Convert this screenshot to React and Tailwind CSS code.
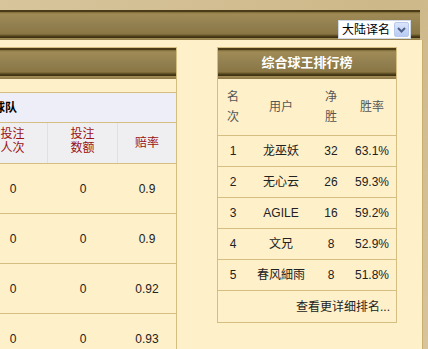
import { useState } from "react";

const bar =
  "bg-[linear-gradient(to_bottom,#4b3c17_0px,#4b3c17_2px,#7d6a36_2px,#a08b56_4px,#938051_14px,#8a7644_24px,#6e5c2c_25px,#3f3213_27px,#3f3213_28px,#a38e5a_28px,#8f7a46_31px)]";

const ranks = [
  ["1", "龙巫妖", "32", "63.1%"],
  ["2", "无心云", "26", "59.3%"],
  ["3", "AGILE", "16", "59.2%"],
  ["4", "文兄", "8", "52.9%"],
  ["5", "春风細雨", "8", "51.8%"],
];

const odds = ["0.9", "0.9", "0.92", "0.93"];

function NameSelect() {
  const [value] = useState("大陆译名");
  return (
    <div className="flex h-[19px] w-[73px] items-stretch border border-[#cfd6e4] bg-white">
      <div className="flex flex-1 items-center pl-[3px] text-[12px] leading-none text-black">{value}</div>
      <div className="m-[1px] flex w-[15px] items-center justify-center rounded-[2px] border border-[#b9c9ec] bg-[linear-gradient(to_bottom,#dbe5fb,#b9cbf4)]">
        <svg width="9" height="6" viewBox="0 0 9 6">
          <polyline points="1,1 4.5,4.5 8,1" fill="none" stroke="#4d6189" strokeWidth="2" />
        </svg>
      </div>
    </div>
  );
}

export default function App() {
  return (
    <div className="h-[349px] w-[428px] overflow-hidden bg-[linear-gradient(135deg,#d8c59c,#cdb889_50%,#d6c49d)] font-['Liberation_Sans','Noto_Sans_CJK_SC',sans-serif]">
      <div className="h-[10px]" />
      <div className="flex">
        <div className="w-[423px]">
          <div className={`flex h-[30px] w-[420px] items-end justify-end pb-[1px] pr-[9px] ${bar}`}>
            <NameSelect />
          </div>
          <div className="flex h-[309px] items-start border-r border-[#c9ae72] bg-[#fef0c9] pt-[7px]">
            {/* left table, cut off at the page edge */}
            <div className="h-[302px] w-[177px] overflow-hidden border-r border-t border-[#d6bd82]">
              <div className={`h-[31px] ${bar}`} />
              <div className="h-[13px]" />
              <div className="flex h-[31px] items-center border-y border-[#d6bd82] bg-[#eeeef8] pl-0 text-[12px] font-bold text-black">
                <span className="-ml-[7px]">球队</span>
              </div>
              <div className="flex h-[41px] border-b border-[#d6bd82] bg-[#efeff2] text-[12px] leading-[14px] text-[#9a1212]">
                <div className="-ml-[22px] flex w-[70px] items-center justify-center border-r border-[#e6e0d2] pb-[4px] text-center">
                  投注<br />人次
                </div>
                <div className="flex w-[70px] items-center justify-center border-r border-[#e6e0d2] pb-[4px] text-center">
                  投注<br />数额
                </div>
                <div className="flex flex-1 items-center justify-center">赔率</div>
              </div>
              {odds.map((o, i) => (
                <div key={i} className="flex h-[50px] items-center border-b border-[#d6bd82] text-[12px] text-[#222]">
                  <div className="-ml-[22px] w-[70px] text-center">0</div>
                  <div className="w-[70px] text-center">0</div>
                  <div className="flex-1 text-center">{o}</div>
                </div>
              ))}
            </div>

            {/* ranking box */}
            <div className="ml-[40px] w-[180px] border border-[#d6bd82]">
              <div className={`flex h-[31px] items-center justify-center pb-[2px] text-[13px] font-bold text-white ${bar}`}>
                综合球王排行榜
              </div>
              <div className="flex h-[57px] items-center border-b border-[#d6bd82] text-[12px] leading-[20px] text-[#555]">
                <div className="w-[30px] text-center">名<br />次</div>
                <div className="w-[66px] text-center">用户</div>
                <div className="w-[34px] text-center">净<br />胜</div>
                <div className="flex-1 text-center">胜率</div>
              </div>
              {ranks.map(([n, u, w, r]) => (
                <div key={n} className="flex h-[31px] items-center border-b border-[#d6bd82] text-[12px] text-[#222]">
                  <div className="w-[30px] text-center">{n}</div>
                  <div className="w-[66px] text-center">{u}</div>
                  <div className="w-[34px] text-center">{w}</div>
                  <div className="flex-1 text-center">{r}</div>
                </div>
              ))}
              <div className="flex h-[31px] items-center justify-end pr-[6px] text-[12px] text-[#222]">
                查看更详细排名...
              </div>
            </div>
          </div>
        </div>
      </div>
    </div>
  );
}
